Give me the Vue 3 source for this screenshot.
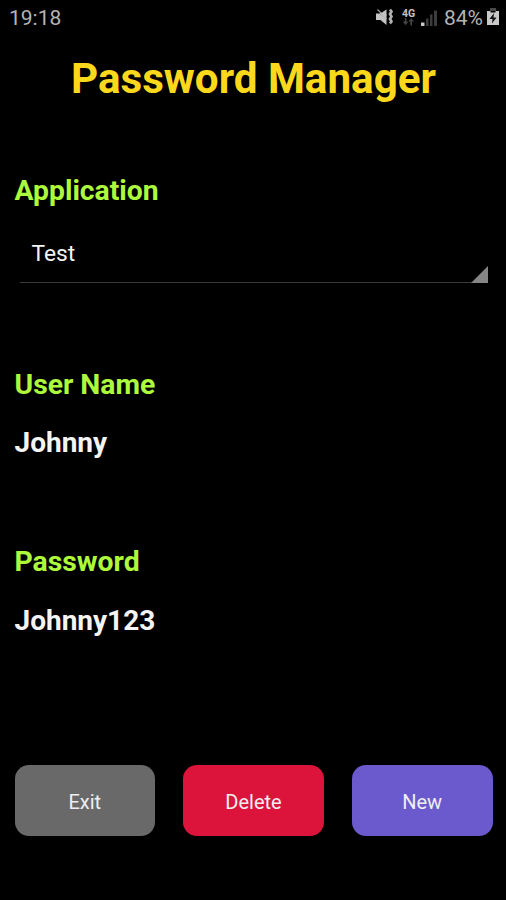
<script setup>
const fields = [
  { label: 'User Name', value: 'Johnny' },
  { label: 'Password', value: 'Johnny123' },
]
const actions = [
  { label: 'Exit', kind: 'exit' },
  { label: 'Delete', kind: 'delete' },
  { label: 'New', kind: 'new' },
]
</script>

<template>
  <main class="screen">
    <header class="status">
      <span class="time">19:18</span>
      <div class="indicators">
        <svg class="mute" width="20" height="20" viewBox="0 0 20 20">
          <path d="M0 6.500h3.500L10.500 12v6l-6-5H0zM6.500 5L10.500 2.500v6.500z" fill="#c4c4c4" />
          <path d="M1.500 2.500l9 9" stroke="#9a9a9a" stroke-width="1.200" />
          <path d="M3.500 6.500l7 6v-5L7 5z" fill="#c4c4c4" />
          <path d="M14 2.500l1.500 2-1.500 2.500 1.500 2.500-1.500 2.500 1.500 2.500-1.500 2" fill="none" stroke="#b2b2b2" stroke-width="2.600" />
        </svg>
        <div class="network">
          <span class="generation">4G</span>
          <svg width="13" height="8" viewBox="0 0 13 8">
            <path d="M2.800 0v3.500H.8l2.800 3.800 2.800-3.800h-2V0zM8.400 7.500v-4H6.600l2.600-3.300 2.800 3.300h-2v4z" fill="#444" />
          </svg>
        </div>
        <svg class="signal" width="18" height="18" viewBox="0 0 18 18">
          <path d="M0 13.500h3.500V17H0z" fill="#c8c8c8" />
          <path d="M5 9.500h2.500V17H5zM9 5.500h2.500V17H9zM13 1.500h3V17h-3z" fill="#3c3c3c" />
        </svg>
        <span class="percent">84%</span>
        <svg class="battery" width="14" height="19" viewBox="0 0 14 19">
          <path d="M4 1h6v3H4z" fill="#484848" />
          <path d="M1 4h3.500v1.500h5V4H13v14H1z" fill="#c9c9c9" />
          <path d="M8 6L3.500 12h3L6 16.500l4.500-6h-3z" fill="#111" />
        </svg>
      </div>
    </header>

    <h1 class="title">Password Manager</h1>

    <section class="application">
      <h2 class="label">Application</h2>
      <div class="spinner">
        <span class="selected">Test</span>
        <svg class="corner" width="17" height="17" viewBox="0 0 17 17">
          <path d="M17 0v17H0z" fill="#858585" />
        </svg>
      </div>
    </section>

    <section v-for="field in fields" :key="field.label" class="field">
      <h2 class="label">{{ field.label }}</h2>
      <p class="value">{{ field.value }}</p>
    </section>

    <footer class="actions">
      <button v-for="action in actions" :key="action.kind" class="action" :class="action.kind">
        {{ action.label }}
      </button>
    </footer>
  </main>
</template>

<style>
body {
  margin: 0;
  background: #000;
}
</style>

<style scoped>
.screen {
  box-sizing: border-box;
  width: 506px;
  height: 900px;
  overflow: hidden;
  background: #000;
  font-family: Roboto, sans-serif;
  color: #f4f4f4;
}
.status {
  display: flex;
  justify-content: space-between;
  height: 35px;
  padding: 0 6px 0 9px;
  font-size: 21px;
  line-height: 36px;
  color: #b4b4b4;
}
.indicators {
  display: flex;
  align-items: center;
}
.mute {
  margin-right: 6px;
  margin-top: -2px;
}
.network {
  display: flex;
  flex-direction: column;
  width: 13px;
  margin-right: 6px;
}
.generation {
  height: 9px;
  font-size: 10.500px;
  font-weight: 700;
  line-height: 9px;
  color: #c4c4c4;
}
.signal {
  margin-right: 5px;
}
.percent {
  margin-right: 3px;
}
.battery {
  margin-top: -2px;
}
.title {
  margin: 20px 0 0;
  padding-left: 1px;
  font-size: 42.200px;
  font-weight: 700;
  line-height: 48px;
  text-align: center;
  color: #fcd81c;
}
.application {
  box-sizing: border-box;
  height: 195px;
  margin-bottom: 70px;
  padding: 71px 18px 0 14.500px;
}
.label,
.value {
  margin: 0;
  font-size: 28.300px;
  font-weight: 700;
  line-height: 34px;
}
.label {
  color: #adf93b;
}
.value {
  margin-top: 24.400px;
  font-size: 28px;
}
.spinner {
  display: flex;
  align-items: flex-end;
  justify-content: space-between;
  box-sizing: border-box;
  height: 49px;
  margin: 26px 0 0 5.500px;
  border-bottom: 1px solid #3a3a3a;
}
.selected {
  padding: 0 0 14px 11.500px;
  font-size: 22.800px;
  line-height: 28px;
}
.corner {
  margin-bottom: -1px;
}
.field {
  height: 177.200px;
  padding-left: 14.500px;
}
.field + .field .value {
  margin-top: 25.200px;
}
.actions {
  display: grid;
  grid-template-columns: repeat(3, 1fr);
  gap: 28px;
  padding: 42.900px 13.500px 0 14.500px;
}
.action {
  height: 70.500px;
  padding: 3px 0 0;
  border: 0;
  border-radius: 14px;
  font: 400 20px/24px Roboto, sans-serif;
  color: #f0eef0;
}
.exit {
  background: #696969;
}
.delete {
  background: #dc143c;
}
.new {
  background: #6a5acd;
}
</style>
